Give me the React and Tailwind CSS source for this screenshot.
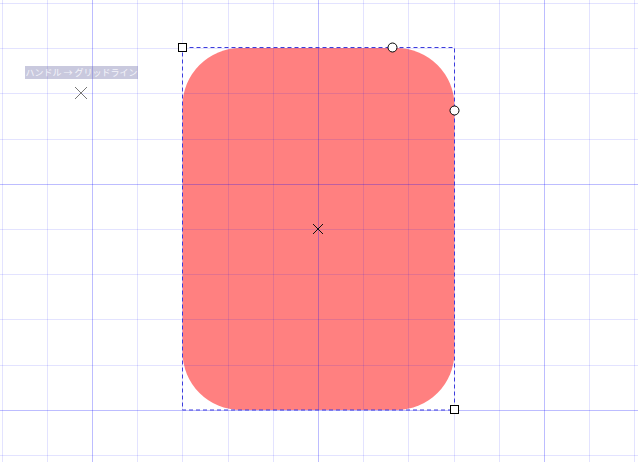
import React from 'react';

const STEP = 45.2;
const CX = 318;
const CY = 229;

function Grid() {
  const v = [];
  for (let k = -7; k <= 7; k++) {
    const x = Math.round(CX + STEP * k) + 0.5;
    const major = k % 5 === 0;
    v.push(
      <line key={'v' + k} x1={x} y1={0} x2={x} y2={462}
        stroke={major ? 'rgba(0,0,255,0.26)' : 'rgba(0,0,255,0.11)'} strokeWidth={1} />
    );
  }
  for (let k = -5; k <= 5; k++) {
    const y = Math.round(CY + STEP * k) + 0.5;
    const major = (k + 1) % 5 === 0;
    v.push(
      <line key={'h' + k} x1={0} y1={y} x2={638} y2={y}
        stroke={major ? 'rgba(0,0,255,0.26)' : 'rgba(0,0,255,0.11)'} strokeWidth={1} />
    );
  }
  return <g>{v}</g>;
}

function Cross({ x, y, size = 5, color = '#000' }) {
  return (
    <g stroke={color} strokeWidth={1}>
      <line x1={x - size} y1={y - size} x2={x + size} y2={y + size} />
      <line x1={x - size} y1={y + size} x2={x + size} y2={y - size} />
    </g>
  );
}

export default function App() {
  return (
    <div className="relative w-[638px] h-[462px] bg-white overflow-hidden">
      <svg width="638" height="462" className="block">
        {/* shape */}
        <rect x={182.5} y={48} width={272} height={362} rx={58} ry={58} fill="#ff8080" />
        <Grid />
        {/* selection box */}
        <rect x={182.5} y={47.5} width={272} height={362.5} fill="none"
          stroke="#3c3cdc" strokeWidth={1} strokeDasharray="4 3" />
        <Cross x={318} y={229} size={5} color="#111" />
        <Cross x={81} y={93} size={6} color="#777" />
        {/* handles */}
        <rect x={178.5} y={43.5} width={8} height={8} fill="#fff" stroke="#000" strokeWidth={1} />
        <rect x={450.5} y={405.5} width={8} height={8} fill="#fff" stroke="#000" strokeWidth={1} />
        <circle cx={392.5} cy={47.5} r={4.5} fill="#fff" stroke="#000" strokeWidth={1} />
        <circle cx={454.5} cy={110.5} r={4.5} fill="#fff" stroke="#000" strokeWidth={1} />
      </svg>
      <div className="absolute left-[25px] top-[66px] h-[13px] w-[113px] bg-[rgba(100,100,160,0.35)] flex items-center justify-center gap-[2px] text-[#f4f4fa] text-[9px] leading-none whitespace-nowrap font-['Noto_Sans_CJK_JP',sans-serif]">
        <span>ハンドル</span>
        <span>→</span>
        <span>グリッドライン</span>
      </div>
    </div>
  );
}
